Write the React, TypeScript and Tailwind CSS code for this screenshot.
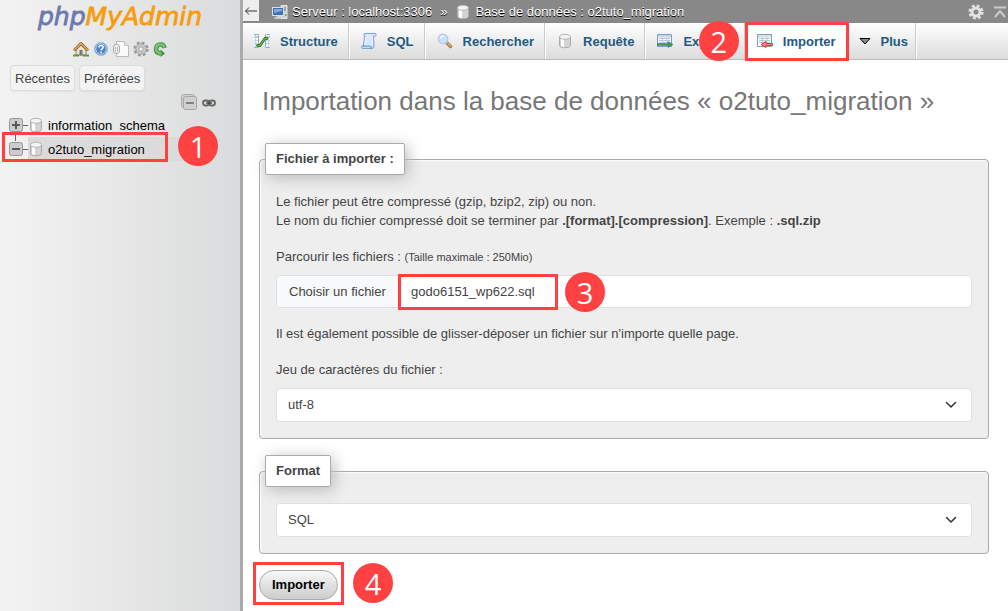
import type { ReactNode } from "react";

function Svg({ w = 16, h = 16, children }: { w?: number; h?: number; children: ReactNode }) {
  return (
    <svg width={w} height={h} viewBox={`0 0 ${w} ${h}`} aria-hidden="true" className="shrink-0">
      {children}
    </svg>
  );
}

function HomeIcon() {
  return (
    <Svg>
      <path d="M3 8v6h10V8L8 3z" fill="#e9e4d8" stroke="#8d8878" />
      <path d="M1 9.500 8 2.500l7 7" fill="none" stroke="#8a5a25" strokeWidth="3" strokeLinejoin="round" />
      <path d="M1 9.300 8 2.500l7 6.800" fill="none" stroke="#e0ab6a" strokeWidth="1.500" />
      <path d="M6.500 9h3v5.500h-3z" fill="#777" />
      <path d="M0 14.500h6M10 14.500h6" stroke="#5e9a3c" strokeWidth="2" />
    </Svg>
  );
}

function HelpIcon() {
  return (
    <Svg>
      <circle cx="8" cy="8" r="6.500" fill="#4d83c9" stroke="#9fb9dd" />
      <circle cx="8" cy="8" r="5.300" fill="none" stroke="#dce8f7" strokeWidth=".8" />
      <path d="M6 6.500c0-2.800 4.200-2.600 4.200-.2 0 1.500-2.100 1.500-2.100 3" fill="none" stroke="#fff" strokeWidth="1.500" />
      <path d="M7.300 10.500h1.600v1.500H7.300z" fill="#fff" />
    </Svg>
  );
}

function DocsIcon() {
  return (
    <Svg>
      <path d="M3.500.5h8l4 4v11h-12z" fill="#fafafa" stroke="#bbb" />
      <path d="M11.500.5v4h4" fill="#e4e4e4" stroke="#c5c5c5" />
      <rect x=".5" y="3.500" width="6" height="9" rx="2.500" fill="#f4f4f4" stroke="#aaa" />
      <path d="M2.500 6v4.500M4.500 6v4.500" stroke="#b5b5b5" />
    </Svg>
  );
}

function GearIcon({ light = false }: { light?: boolean }) {
  return (
    <Svg>
      <circle cx="8" cy="8" r="6.200" fill="none" stroke={light ? "#e2e2e2" : "#9a9a9a"} strokeWidth="2.800" strokeDasharray="2.700 2.170" />
      <circle cx="8" cy="8" r="4" fill="none" stroke={light ? "#e2e2e2" : "#c8c8c8"} strokeWidth="3" />
      {!light && <circle cx="8" cy="8" r="5.300" fill="none" stroke="#9a9a9a" strokeWidth=".7" />}
      {!light && <circle cx="8" cy="8" r="2.300" fill="#eee" stroke="#929292" strokeWidth=".8" />}
    </Svg>
  );
}

function ReloadIcon() {
  return (
    <Svg>
      <path d="M11.500 7C11 4.500 9.500 3.500 7.500 3.500 4.500 3.500 3 5.500 3 8s1.500 4.200 4.500 4.500" fill="none" stroke="#3f8f40" strokeWidth="4.500" />
      <path d="M7.500 8.500 12 12.500l-4.500 3.500z" fill="#3f8f40" />
      <path d="M11.300 6.500C10.800 4.500 9.500 3.500 7.500 3.500 4.500 3.500 3 5.500 3 8s1.500 4.200 5.500 4.500" fill="none" stroke="#7fc378" strokeWidth="2.500" />
    </Svg>
  );
}

function DatabaseIcon() {
  return (
    <Svg>
      <path d="M2.500 4v8.500c0 3 11 3 11 0V4" fill="#d4d4d4" stroke="#aaa" />
      <path d="M4 5v8c1 1 2 1.200 3 1.200V6z" fill="#fff" />
      <ellipse cx="8" cy="3.800" rx="5.500" ry="2.500" fill="#f4f4f4" stroke="#b5b5b5" />
    </Svg>
  );
}

function ServerIcon() {
  return (
    <Svg>
      <path d="M9 1.500h6v13H9z" fill="#cfd2d0" stroke="#e8e8e8" />
      <path d="M11 4h3M11 6h3" stroke="#777" />
      <path d="M13 11h1.500" stroke="#56c33b" strokeWidth="2" />
      <rect x=".5" y="3.500" width="11" height="8" fill="#3f70b5" stroke="#ddd" />
      <path d="M2 5h8v2L2 9z" fill="#82a9db" />
      <path d="M4 12h4v2H2.500h7" fill="#ccc" stroke="#ddd" />
    </Svg>
  );
}

function StructureIcon() {
  return (
    <Svg>
      <path d="M0 1.500h4.500v13H0M16 1.500h-4.500v13H16" fill="#f6f9fd" stroke="#8fafd8" />
      <path d="M0 4h4M12 4h4" stroke="#b5d3a5" strokeWidth="2" />
      <path d="M0 7.500h4M0 10.500h4M12 7.500h4M12 10.500h4M1.500 2v12M14.500 2v12" stroke="#c3d3ea" />
      <path d="M3.500 12.500H6l5-7h2" fill="none" stroke="#398331" strokeWidth="2.800" strokeLinecap="round" />
      <path d="M3.500 12.500H6l5-7h2" fill="none" stroke="#6ab04f" strokeWidth="1.200" />
    </Svg>
  );
}

function SqlIcon() {
  return (
    <Svg>
      <path d="M4 .5h10c1.500 0 1.500 3-.5 3h-1L13 13c0 1.500-.8 2.500-2 2.500H1.500c-1.500 0-1.500-2.500 0-2.500h1L3.500 3C2.500 2.500 2.500.5 4 .5z" fill="#c4daf6" stroke="#7ba2d6" />
      <path d="M5 4h6.500L11 12.500H3.800z" fill="#d8e8fc" stroke="#f2f7fe" />
      <path d="M4.500 2h8.500" stroke="#f2f7fe" />
      <path d="M1.500 13h8c.5 0 .5 2.500 1.500 2.500" fill="none" stroke="#5b83bd" />
    </Svg>
  );
}

function SearchIcon() {
  return (
    <Svg>
      <path d="m9.500 9.500 4 4" stroke="#a97c4b" strokeWidth="3.500" strokeLinecap="round" />
      <path d="m10 9.500 3.500 3.500" stroke="#dfaf73" strokeWidth="1.500" strokeLinecap="round" />
      <circle cx="6" cy="6" r="4.800" fill="#cbe0fa" stroke="#b7c7dc" strokeWidth="1.200" />
      <path d="M3.500 5.500c.5-2 2-2.500 3.500-2.500" fill="none" stroke="#fff" strokeWidth="1.200" />
    </Svg>
  );
}

function TableIcon({ kind }: { kind: "export" | "import" }) {
  return (
    <Svg>
      <path d="M.5 1.500h14v12H.5z" fill="#fff" stroke="#7f9ed0" />
      <path d="M1 2h13v2.500H1z" fill={kind === "export" ? "#c9dfad" : "#d8e4cf"} />
      <path d="M2 5.500h11M2 7.500h11M2 9.500h11M5.500 4.500V13M10 4.500V13" stroke="#b5c5e2" />
      {kind === "export" ? (
        <path d="M0 10.500h11V8.500l5 3-5 3v-2H0z" fill="#4c9a45" stroke="#2f7a2e" strokeWidth=".5" />
      ) : (
        <path d="M15.500 10.500H9V8.500l-5 3 5 3v-2h6.500z" fill="#f88" stroke="#d93636" strokeWidth="1" />
      )}
    </Svg>
  );
}

function TreeToggle({ open = false }: { open?: boolean }) {
  return (
    <Svg w={14} h={14}>
      <rect x=".5" y=".5" width="13" height="13" rx="2" fill="#cbcccd" stroke="#979899" />
      <path d={open ? "M3 7h8" : "M3 7h8M7 3v8"} stroke="#5a5a5a" strokeWidth="2" />
    </Svg>
  );
}

function Badge({ n, place }: { n: number; place: string }) {
  return (
    <span className={`pointer-events-none absolute z-20 flex size-10 items-center justify-center rounded-full bg-[#ff4141] font-['Open_Sans',sans-serif] text-[29px] font-medium leading-none text-white ${place}`}>
      {n}
    </span>
  );
}

function Frame({ place }: { place: string }) {
  return <span aria-hidden="true" className={`pointer-events-none absolute z-10 border-3 border-[#ff4141] ${place}`} />;
}

function TreeRow({ name, open = false }: { name: string; open?: boolean }) {
  return (
    <li className="relative flex h-6 items-center">
      <button type="button" aria-label={`Développer ${name}`}>
        <TreeToggle open={open} />
      </button>
      {open && <span className="absolute -top-1 left-1.5 h-2 w-px bg-[#666]" />}
      <span className="h-px w-[5px] bg-[#666]" />
      <a href="#db" className={`flex h-full grow items-center gap-1 text-black ${open ? "bg-[#dbdbdb]" : ""}`}>
        <DatabaseIcon />
        {name}
      </a>
      {open && <Frame place="-left-[7px] -top-[5px] h-[30px] w-[166px]" />}
      {open && <Badge n={1} place="left-[169px] -top-[11px]" />}
    </li>
  );
}

function Sidebar() {
  return (
    <aside className="w-[243px] shrink-0 border-r-3 border-[#aaa] bg-linear-to-r from-[#f3f3f3] to-[#dadbdc]">
      <a href="#home" aria-label="phpMyAdmin" className="flex h-9 justify-center">
        <svg width="170" height="36" viewBox="0 0 170 36">
          <text x="3" y="25" fontFamily="DejaVu Sans" fontSize="25" fontStyle="italic" strokeWidth=".8">
            <tspan fill="#6c78af" stroke="#6c78af">php</tspan>
            <tspan fill="#f89c0e" stroke="#f89c0e">MyAdmin</tspan>
          </text>
        </svg>
      </a>
      <nav aria-label="Raccourcis" className="mt-[5px] flex gap-1 pl-[73px]">
        <a href="#home" aria-label="Accueil"><HomeIcon /></a>
        <a href="#help" aria-label="Aide"><HelpIcon /></a>
        <a href="#docs" aria-label="Documentation"><DocsIcon /></a>
        <a href="#settings" aria-label="Paramètres"><GearIcon /></a>
        <a href="#reload" aria-label="Actualiser"><ReloadIcon /></a>
      </nav>
      <div className="mt-2 flex gap-1 pl-2.5">
        <button type="button" className="h-[26px] rounded border border-[#ddd] bg-[#f3f3f3] px-1 shadow-xs">Récentes</button>
        <button type="button" className="h-[26px] rounded border border-[#ddd] bg-[#f3f3f3] px-1 shadow-xs">Préférées</button>
      </div>
      <div className="mt-[3px] flex items-center justify-end gap-1 pr-6">
        <button type="button" aria-label="Tout réduire">
          <Svg w={17} h={17}>
            <rect x=".5" y=".5" width="13" height="13" rx="2" fill="#cfd0d1" stroke="#aaa" />
            <rect x="2.500" y="2.500" width="13" height="13" rx="2" fill="#cfd0d1" stroke="#a5a5a5" />
            <path d="M5 9h8" stroke="#666" strokeWidth="1.500" />
          </Svg>
        </button>
        <button type="button" aria-label="Lier avec le panneau principal">
          <Svg w={14} h={14}>
            <rect x="1" y="4.500" width="6" height="5" rx="2.500" fill="none" stroke="#666" strokeWidth="1.800" />
            <rect x="7" y="4.500" width="6" height="5" rx="2.500" fill="none" stroke="#666" strokeWidth="1.800" />
            <path d="M4 7h6" stroke="#444" strokeWidth="1.500" />
          </Svg>
        </button>
      </div>
      <ul className="mt-[2px] pl-[9px] pr-12">
        <TreeRow name="information_schema" />
        <TreeRow name="o2tuto_migration" open />
      </ul>
    </aside>
  );
}

interface TabProps {
  icon: ReactNode;
  label: string;
  active?: boolean;
  compact?: boolean;
  children?: ReactNode;
}

function Tab({ icon, label, active = false, compact = false, children }: TabProps) {
  return (
    <li className="relative">
      <a
        href={`#${label}`}
        className={`flex h-9 items-center gap-2.5 border-r border-white pl-[11px] font-bold text-[#235a81] ${compact ? "pr-2" : "pr-[11px]"} ${active ? "bg-white" : "shadow-[inset_-1px_0_0_#ccc]"}`}
      >
        {icon}
        {label}
      </a>
      {children}
    </li>
  );
}

function Select({ id, value }: { id: string; value: string }) {
  return (
    <div className="relative">
      <select id={id} aria-label={value} defaultValue={value} className="block h-[34px] w-full appearance-none rounded border border-[#dcdfe6] bg-white px-[11px] pb-0.5 text-[#444]">
        <option>{value}</option>
      </select>
      <svg width="12" height="8" viewBox="0 0 12 8" aria-hidden="true" className="pointer-events-none absolute right-[15px] top-[13px]">
        <path d="m1.500 1.500 4.500 4.500 4.500-4.500" fill="none" stroke="#343a40" strokeWidth="1.600" strokeLinecap="round" strokeLinejoin="round" />
      </svg>
    </div>
  );
}

function Panel({ title, children }: { title: string; children: ReactNode }) {
  return (
    <fieldset className="rounded border border-[#aaa] bg-[#eee] px-4 pb-4 shadow-[inset_1px_1px_2px_#fff]">
      <legend className="-ml-[11px] rounded-xs border border-[#aaa] bg-white px-2.5 py-1.5 font-bold leading-[18px] shadow-[3px_3px_15px_#bbb]">
        {title}
      </legend>
      {children}
    </fieldset>
  );
}

export default function App() {
  return (
    <div className="flex min-h-screen bg-white font-['Liberation_Sans',Arial,sans-serif] text-[13px] leading-[19px] text-[#444]">
      <Sidebar />
      <div className="min-w-0 grow">
        <header className="flex h-[23px] items-center bg-[#888] text-white [text-shadow:0_1px_0_#000]">
          <button type="button" aria-label="Masquer le panneau" className="mb-0.5 flex h-[21px] w-4 items-center justify-center bg-[#eee]">
            <Svg w={14} h={10}>
              <path d="M13 5H1.500M5 1.500 1.500 5 5 8.500" fill="none" stroke="#333" />
            </Svg>
          </button>
          <nav aria-label="Fil d'Ariane" className="flex items-center pl-[13px]">
            <a href="#server" className="flex items-center gap-1"><ServerIcon /> Serveur : localhost:3306</a>
            <span className="px-2">»</span>
            <a href="#db" className="flex items-center gap-1"><DatabaseIcon /> Base de données : o2tuto_migration</a>
          </nav>
          <div className="ml-auto flex items-center gap-2.5 pr-0.5">
            <button type="button" aria-label="Paramètres de page"><GearIcon light /></button>
            <button type="button" aria-label="Haut de page">
              <Svg w={12} h={12}>
                <path d="M0 1.500h12M1 11l5-6 5 6" fill="none" stroke="#ccc" strokeWidth="2" />
              </Svg>
            </button>
          </div>
        </header>
        <nav aria-label="Onglets" className="border-b border-[#bbb] bg-linear-to-b from-white to-[#dcdcdc]">
          <ul className="flex">
            <Tab icon={<StructureIcon />} label="Structure" />
            <Tab icon={<SqlIcon />} label="SQL" />
            <Tab icon={<SearchIcon />} label="Rechercher" />
            <Tab icon={<DatabaseIcon />} label="Requête" />
            <Tab icon={<TableIcon kind="export" />} label="Exporter" compact>
              <Badge n={2} place="right-[7px] -top-[2px]" />
            </Tab>
            <Tab icon={<TableIcon kind="import" />} label="Importer" active>
              <Frame place="-left-px -right-px -top-px h-[39px]" />
            </Tab>
            <Tab
              icon={
                <Svg w={12} h={12}>
                  <path d="M1 3.500h10L6 9z" fill="#888" stroke="#000" />
                </Svg>
              }
              label="Plus"
              compact
            />
          </ul>
        </nav>
        <main className="pb-1 pl-4 pr-[19px] pt-[23px]">
          <h1 className="ml-[3px] text-[26px] leading-9 text-[#777]">Importation dans la base de données « o2tuto_migration »</h1>
          <form className="mt-6">
            <Panel title="Fichier à importer :">
              <p className="mt-[17px]">Le fichier peut être compressé (gzip, bzip2, zip) ou non.</p>
              <p>
                Le nom du fichier compressé doit se terminer par <b>.[format].[compression]</b>. Exemple : <b>.sql.zip</b>
              </p>
              <label htmlFor="file" className="mt-[17px] block">
                Parcourir les fichiers : <small className="text-[11px]">(Taille maximale : 250Mio)</small>
              </label>
              <div className="relative mt-2">
                <input id="file" type="file" className="peer sr-only" />
                <label htmlFor="file" className="flex h-[33px] items-stretch rounded border border-[#dcdfe6] bg-white">
                  <span className="flex w-[122px] items-center rounded-l bg-[#f8f9fa] pl-3">Choisir un fichier</span>
                  <span className="flex items-center pl-3">godo6151_wp622.sql</span>
                </label>
                <Frame place="left-[122px] -top-px h-9 w-[160px]" />
                <Badge n={3} place="left-[289px] -top-[3px]" />
              </div>
              <p className="mt-4">Il est également possible de glisser-déposer un fichier sur n'importe quelle page.</p>
              <label htmlFor="charset" className="mb-[9px] mt-[17px] block">Jeu de caractères du fichier :</label>
              <Select id="charset" value="utf-8" />
            </Panel>
            <div className="mt-4">
              <Panel title="Format">
                <div className="mt-4"><Select id="format" value="SQL" /></div>
              </Panel>
            </div>
            <div className="relative mt-4 w-fit">
              <button type="submit" className="h-[30px] rounded-full border border-[#aaa] bg-linear-to-b from-[#f8f8f8] to-[#ccc] px-3 pb-0.5 font-bold text-black">
                Importer
              </button>
              <Frame place="-inset-x-1.5 -top-2 h-[43px]" />
              <Badge n={4} place="left-[94px] -top-[7px]" />
            </div>
          </form>
        </main>
      </div>
    </div>
  );
}
